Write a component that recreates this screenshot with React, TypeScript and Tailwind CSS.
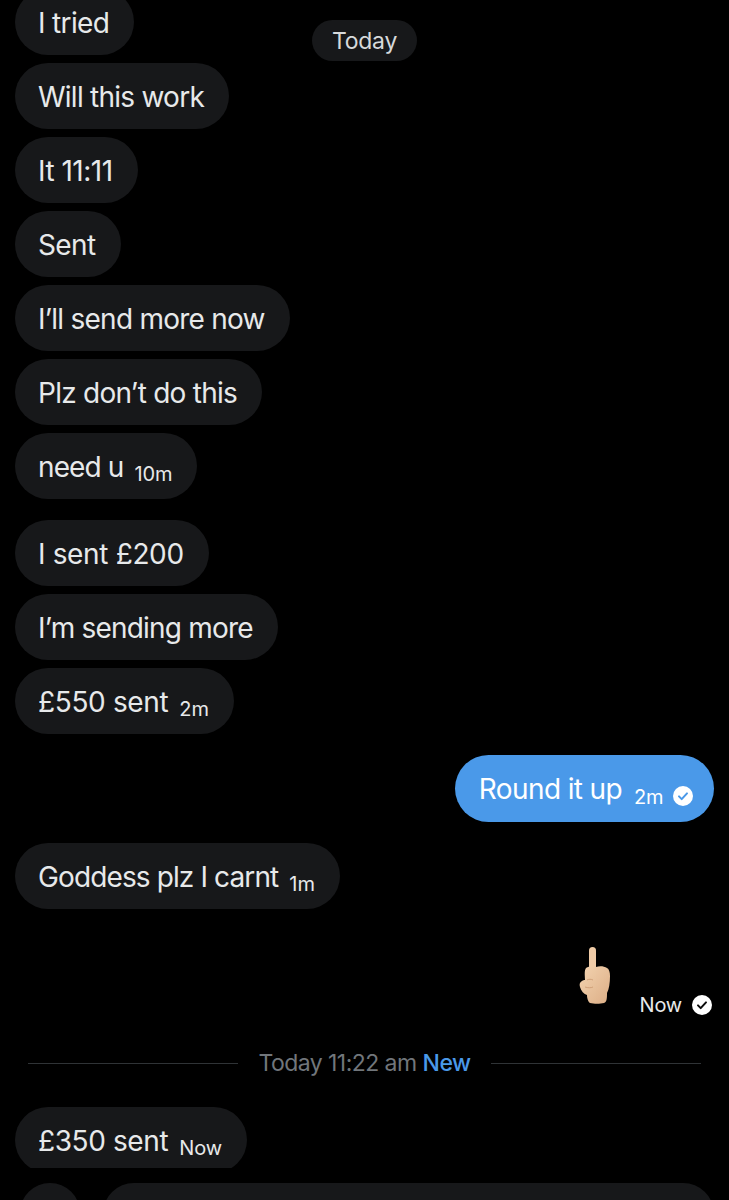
const font = "font-['Inter','Liberation_Sans',sans-serif]";

function Check({ dark }: { dark?: boolean }) {
  return (
    <svg width="20" height="20" viewBox="0 0 20 20" className="shrink-0">
      <circle cx="10" cy="10" r="10" fill="#ffffff" />
      <path
        d="M6 10.4l2.7 2.7L14 7.4"
        fill="none"
        stroke={dark ? "#0b0b0b" : "#4a99e9"}
        strokeWidth="2"
        strokeLinecap="round"
        strokeLinejoin="round"
      />
    </svg>
  );
}

function Bubble({ text, time, track = "tracking-[-0.75px]" }: { text: string; time?: string; track?: string }) {
  return (
    <div className="flex h-[66px] w-fit items-center rounded-[33px] bg-[#17181a] pl-[23px] pr-[25px]">
      <span className={`pt-[1px] text-[28px] leading-none text-[#e7e9ea] ${track}`}>{text}</span>
      {time && <span className="ml-[11px] mt-[16px] text-[20px] leading-none tracking-[-0.1px] text-[#e7e9ea]">{time}</span>}
    </div>
  );
}

function FingerEmoji() {
  return (
    <svg width="34" height="58" viewBox="0 0 34 58">
      <defs>
        <linearGradient id="skin" x1="0" y1="0" x2="1" y2="1">
          <stop offset="0" stopColor="#f3d3b0" />
          <stop offset="1" stopColor="#dcae86" />
        </linearGradient>
      </defs>
      <rect x="11" y="0" width="7" height="30" rx="3.5" fill="#efcba7" />
      <path
        d="M8 21c3-2 7-2 10-1 3-1 8-1 11 1 2 1 3 4 3 8 0 7-1 13-3 17 0 5 0 9-3 10-4 1-10 1-14 0-2-1-3-5-3-8-3-1-6-4-7-8-1-3 0-5 2-6 1-1 2-1 3-1 0-4-1-9 1-12z"
        fill="url(#skin)"
      />
      <path d="M9 33c2-1 4-1 6 0M7 40c3 1 6 1 8 0" fill="none" stroke="#c9976e" strokeWidth="0.8" />
    </svg>
  );
}

export default function App() {
  return (
    <div className={`relative h-[1200px] w-[729px] overflow-hidden bg-black ${font}`}>
      <div className="absolute left-[312px] top-[20px] flex h-[41px] w-[105px] items-center justify-center rounded-full bg-[#17181a] pt-[1px] text-[23px] tracking-[-0.25px] text-[#d6d9db]">
        Today
      </div>

      <div className="-mt-[11px] flex flex-col px-[15px]">
        <div className="flex flex-col gap-[8px]">
          <Bubble text="I tried" track="tracking-[-0.65px]" />
          <Bubble text="Will this work" />
          <Bubble text="It 11:11" track="tracking-[-0.5px]" />
          <Bubble text="Sent" track="tracking-[-0.6px]" />
          <Bubble text="I’ll send more now" />
          <Bubble text="Plz don’t do this" />
          <Bubble text="need u" time="10m" track="tracking-[-0.9px]" />
        </div>
        <div className="mt-[21px] flex flex-col gap-[8px]">
          <Bubble text="I sent £200" track="tracking-[-0.35px]" />
          <Bubble text="I’m sending more" track="tracking-[-0.8px]" />
          <Bubble text="£550 sent" time="2m" track="tracking-[-0.35px]" />
        </div>

        <div className="mt-[21px] flex justify-end">
          <div className="flex h-[67px] items-center rounded-[34px] bg-[#4a99e9] pl-[24px] pr-[21px]">
            <span className="text-[28px] leading-none tracking-[-0.62px] text-white">Round it up</span>
            <span className="ml-[12px] mt-[16px] text-[20px] leading-none tracking-[-0.4px] text-white">2m</span>
            <span className="ml-[10px] mt-[15px]"><Check /></span>
          </div>
        </div>

        <div className="mt-[21px]">
          <Bubble text="Goddess plz I carnt" time="1m" track="tracking-[-0.88px]" />
        </div>

        <div className="mt-[38px] flex h-[70px] justify-end pr-[2px]">
          <div className="mr-[28px]"><FingerEmoji /></div>
          <div className="mt-[48px] flex h-[20px] items-center gap-[10px]">
            <span className="text-[20px] leading-none tracking-[-0.2px] text-[#e7e9ea]">Now</span>
            <Check dark />
          </div>
        </div>

        <div className="mt-[32px] flex h-[28px] items-center px-[13px]">
          <div className="h-px flex-1 bg-[#2f3336]" />
          <div className="mx-[20px] flex items-center gap-[6px] text-[23px] tracking-[-0.55px]">
            <span className="text-[#71767b]">Today 11:22 am</span>
            <span className="font-medium text-[#4a99e9]">New</span>
          </div>
          <div className="h-px flex-1 bg-[#2f3336]" />
        </div>

        <div className="mt-[30px] h-[61px] overflow-hidden">
          <Bubble text="£350 sent" time="Now" track="tracking-[-0.4px]" />
        </div>

        <div className="mt-[15px] flex gap-[23px] pl-[5px]">
          <div className="h-[60px] w-[60px] shrink-0 rounded-full bg-[#17181a]" />
          <div className="h-[62px] flex-1 rounded-[31px] bg-[#17181a]" />
        </div>
      </div>
    </div>
  );
}
